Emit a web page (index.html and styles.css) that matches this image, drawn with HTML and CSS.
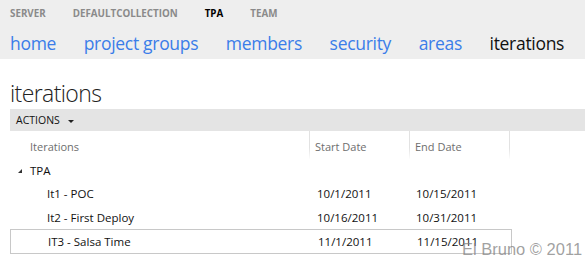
FILE: index.html
```html
<!DOCTYPE html>
<html lang="en">

<head>
  <meta charset="UTF-8">
  <title>iterations</title>
  <link rel="stylesheet" href="styles.css">
</head>

<body>
  <div class="top">
    <div class="crumbs">
      <span>SERVER</span>
      <span>DEFAULTCOLLECTION</span>
      <span class="current">TPA</span>
      <span>TEAM</span>
    </div>
    <nav class="tabs">
      <a href="#">home</a>
      <a href="#">project groups</a>
      <a href="#">members</a>
      <a href="#">security</a>
      <a href="#">areas</a>
      <a href="#" class="active">iterations</a>
    </nav>
  </div>

  <div class="content">
    <h1>iterations</h1>
    <div class="toolbar">ACTIONS <span class="caret"></span></div>

    <div class="grid">
      <div class="grid-head">
        <div class="col name">Iterations</div>
        <div class="col date">Start Date</div>
        <div class="col date">End Date</div>
      </div>
      <div class="row group">
        <div class="col name"><span class="expander"></span>TPA</div>
      </div>
      <div class="row">
        <div class="col name child">It1 - POC</div>
        <div class="col date">10/1/2011</div>
        <div class="col date">10/15/2011</div>
      </div>
      <div class="row">
        <div class="col name child">It2 - First Deploy</div>
        <div class="col date">10/16/2011</div>
        <div class="col date">10/31/2011</div>
      </div>
      <div class="row selected">
        <div class="col name child">IT3 - Salsa Time</div>
        <div class="col date">11/1/2011</div>
        <div class="col date">11/15/2011</div>
      </div>
    </div>
  </div>

  <div class="watermark">El Bruno © 2011</div>
</body>

</html>
```

FILE: styles.css
```css
body {
  margin: 0;
  font-family: "Open Sans", "Noto Sans", sans-serif;
  background: white;
  color: #111;
  position: relative;
  height: 261px;
  overflow: hidden;
}

.top {
  background-color: #eeeeee;
  height: 59px;
  padding-left: 10px;
}

.crumbs {
  display: flex;
  gap: 27px;
  padding-top: 7px;
  height: 17px;
  font-size: 9.8px;
  font-weight: bold;
  color: #8a8a8a;
}

.crumbs .current {
  color: #000;
}

.tabs {
  display: flex;
  gap: 27.6px;
  margin-top: 7px;
}

.tabs a {
  font-size: 17.5px;
  line-height: 24px;
  color: #3b7de9;
  text-decoration: none;
  letter-spacing: -0.3px;
}

.tabs a.active {
  color: #111;
}

.content {
  padding-left: 10px;
}

h1 {
  margin: 0;
  padding-top: 19px;
  height: 31px;
  font-size: 23px;
  line-height: 30px;
  font-weight: 300;
  color: #222;
  letter-spacing: -0.6px;
}

.toolbar {
  background-color: #e4e4e4;
  height: 22px;
  line-height: 22px;
  padding-left: 6px;
  font-size: 10.5px;
  color: #111;
}

.caret {
  display: inline-block;
  margin-left: 5px;
  vertical-align: middle;
  border-left: 3px solid transparent;
  border-right: 3px solid transparent;
  border-top: 3px solid #222;
}

.grid {
  font-size: 11.5px;
}

.grid-head,
.row {
  display: flex;
}

.grid-head {
  height: 28px;
  line-height: 32px;
  font-size: 11px;
  color: #6e6e6e;
}

.grid-head .col {
  border-right: 1px solid transparent;
  border-image: linear-gradient(#e2e2e2, #e2e2e2 60%, white) 1;
}

.col.name {
  width: 279px;
  padding-left: 20px;
}

.col.date {
  width: 94px;
  padding-left: 5px;
}

.row .col.date {
  padding-left: 8px;
  width: 91px;
}

.row {
  height: 24px;
  line-height: 25px;
}

.row.group {
  height: 22px;
  line-height: 24px;
}

.row.group .col.name {
  padding-left: 8px;
}

.expander {
  display: inline-block;
  margin-right: 8px;
  vertical-align: middle;
  margin-top: -2px;
  border-left: 4px solid transparent;
  border-bottom: 4px solid #333;
}

.col.child {
  padding-left: 37px;
  width: 262px;
}

.row.selected {
  width: 500px;
  border: 1px solid #c8c8c8;
  height: 23px;
  line-height: 23px;
}

.watermark {
  position: absolute;
  left: 462px;
  top: 240px;
  font-family: "Liberation Sans", Arial, sans-serif;
  font-size: 16.5px;
  color: rgba(130, 130, 130, 0.75);
}
```
